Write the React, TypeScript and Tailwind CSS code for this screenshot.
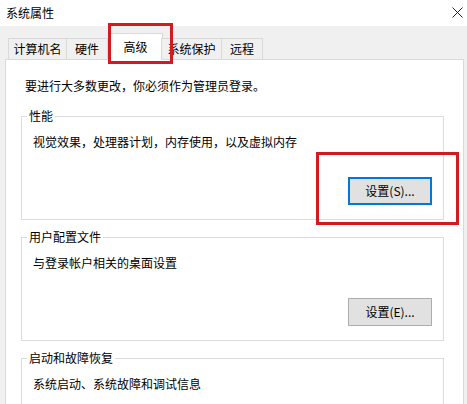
import React from "react"

const font = {
  fontFamily: '"Noto Sans CJK SC", "Microsoft YaHei", sans-serif',
}

const tabs = [
  { label: "计算机名", w: "w-[59px]" },
  { label: "硬件", w: "w-[42px]" },
  { label: "高级", w: "w-[55px]", active: true },
  { label: "系统保护", w: "w-[61px]" },
  { label: "远程", w: "w-[42px]" },
]

const GroupBox = ({
  title,
  text,
  button,
  focused,
  last,
}: {
  title: string
  text: string
  button?: string
  focused?: boolean
  last?: boolean
}) => {
  return (
    <div
      className={`ml-[15px] mr-[19px] border border-[#dcdcdc] ${
        last ? "border-b-0 h-[60px]" : "pb-[14px]"
      }`}
    >
      <div className="-mt-[9px] ml-[5px] w-fit bg-white px-[2px] leading-[16px]">{title}</div>
      <div className="pl-[11px] pt-[10px] leading-[16px]">{text}</div>
      {button && (
        <div className="flex justify-end pr-[11px] pt-[27px]">
          <button
            className={`w-[84px] h-[28px] bg-[#e1e1e1] leading-none ${
              focused ? "border-2 border-[#0078d7]" : "border border-[#adadad]"
            }`}
          >
            {button}
          </button>
        </div>
      )}
    </div>
  )
}

export default function App() {
  return (
    <div
      className="relative w-[467px] h-[404px] overflow-hidden bg-[#f0f0f0] text-[12px] text-black"
      style={font}
    >
      {/* title bar */}
      <div className="flex h-[26px] items-center justify-between bg-white pl-[6px] pr-[4px]">
        <span className="leading-none">系统属性</span>
        <svg width="11" height="11" viewBox="0 0 11 11" className="mb-[2px]">
          <path d="M0.5 0.5 L10.5 10.5 M10.5 0.5 L0.5 10.5" stroke="#222" strokeWidth="1" fill="none" />
        </svg>
      </div>

      <div className="pl-[5px] pr-[3px] pt-[7px]">
        {/* tab strip */}
        <div className="relative z-10 flex h-[27px] items-end pl-[3px] -mb-px">
          {tabs.map((t) =>
            t.active ? (
              <div
                key={t.label}
                className={`${t.w} h-[27px] flex items-start justify-center pt-[5px] bg-white border border-b-0 border-[#d9d9d9] leading-[16px] -mr-[1px]`}
              >
                {t.label}
              </div>
            ) : (
              <div
                key={t.label}
                className={`${t.w} h-[22px] flex items-center justify-center bg-[#f0f0f0] border border-[#d9d9d9] -ml-px first:ml-0 leading-[16px] pb-[1px]`}
              >
                {t.label}
              </div>
            )
          )}
        </div>

        {/* page */}
        <div className="h-[360px] bg-white border border-[#d9d9d9]">
          <div className="pl-[19px] pt-[18px] leading-[16px]">
            要进行大多数更改，你必须作为管理员登录。
          </div>
          <div className="flex flex-col gap-[17px] pt-[22px]">
            <GroupBox
              title="性能"
              text="视觉效果，处理器计划，内存使用，以及虚拟内存"
              button="设置(S)..."
              focused
            />
            <GroupBox title="用户配置文件" text="与登录帐户相关的桌面设置" button="设置(E)..." />
            <GroupBox title="启动和故障恢复" text="系统启动、系统故障和调试信息" last />
          </div>
        </div>
      </div>

      {/* red highlight frames */}
      <div className="absolute left-[108px] top-[23px] w-[65px] h-[41px] border-[3px] border-[#d01c1f] z-20" />
      <div className="absolute left-[316px] top-[152px] w-[143px] h-[73px] border-[3px] border-[#d01c1f] z-20" />
    </div>
  )
}
